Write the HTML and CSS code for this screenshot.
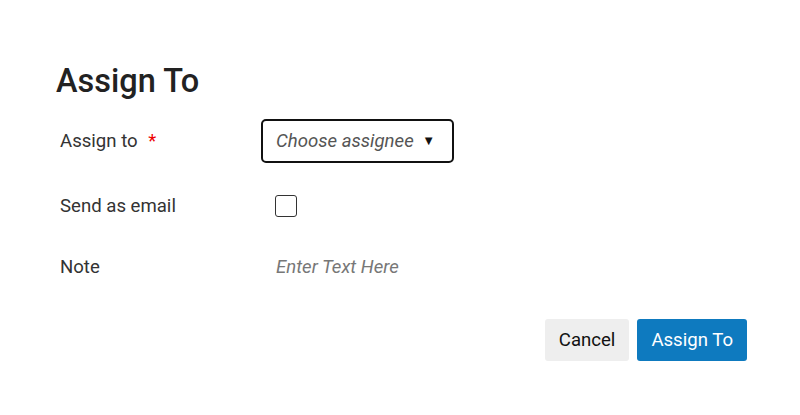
FILE: index.html
```html
<!DOCTYPE html>
<html lang="en">

<head>
    <meta charset="UTF-8">
    <meta name="viewport" content="width=device-width, initial-scale=1.0">
    <title>Assign To</title>
    <link rel="stylesheet" href="styles.css">
</head>

<body>
    <div class="dialog">
        <h1 class="dialog-title">Assign To</h1>

        <div class="form">
            <div class="form-row row-assignee">
                <label class="form-label">Assign to <span class="required">*</span></label>
                <div class="form-control">
                    <button class="select-box" type="button">
                        <span class="select-text">Choose assignee</span>
                        <span class="select-arrow">&#9660;</span>
                    </button>
                </div>
            </div>

            <div class="form-row row-email">
                <label class="form-label" for="sendEmail">Send as email</label>
                <div class="form-control">
                    <input type="checkbox" id="sendEmail" class="checkbox">
                </div>
            </div>

            <div class="form-row row-note">
                <label class="form-label" for="note">Note</label>
                <div class="form-control">
                    <input type="text" id="note" class="note-input" placeholder="Enter Text Here">
                </div>
            </div>
        </div>

        <div class="actions">
            <button class="btn btn-cancel" type="button">Cancel</button>
            <button class="btn btn-primary" type="button">Assign To</button>
        </div>
    </div>
</body>

</html>
```

FILE: styles.css
```css
body {
    margin: 0;
    font-family: Roboto, 'Noto Sans', sans-serif;
    color: #222;
    background: #fff;
}

.dialog {
    padding: 61px 53px 0 56px;
}

.dialog-title {
    margin: 0 0 18px;
    font-size: 32.5px;
    font-weight: 500;
    line-height: 40px;
    color: #222;
}

.form-row {
    display: flex;
    align-items: center;
}

.row-assignee {
    height: 43px;
}

.row-email {
    height: 43px;
    margin-top: 22px;
}

.row-note {
    height: 43px;
    margin-top: 18px;
}

.form-label {
    width: 201px;
    padding-left: 4px;
    font-size: 18.6px;
    color: #333;
}

.required {
    color: #e00;
    margin-left: 6px;
}

.form-control {
    display: flex;
    align-items: center;
}

.select-box {
    display: flex;
    align-items: center;
    height: 44px;
    width: 193px;
    padding: 0 17px 0 13px;
    border: 2px solid #111;
    border-radius: 5px;
    background: #fff;
    font-family: inherit;
    cursor: pointer;
    box-sizing: border-box;
}

.select-text {
    flex: 1;
    text-align: left;
    font-size: 18.6px;
    font-style: italic;
    color: #555;
}

.select-arrow {
    font-size: 13px;
    color: #111;
}

.checkbox {
    appearance: none;
    width: 22px;
    height: 22px;
    margin: 0 0 0 14px;
    border: 1px solid #333;
    border-radius: 3px;
    background: #fff;
}

.note-input {
    width: 300px;
    margin-left: 15px;
    padding: 0;
    border: none;
    outline: none;
    font-family: inherit;
    font-size: 18.6px;
    font-style: italic;
    color: #333;
}

.note-input::placeholder {
    color: #777;
}

.actions {
    display: flex;
    justify-content: flex-end;
    gap: 8px;
    margin-top: 31px;
}

.btn {
    height: 42px;
    padding: 0 14px;
    border: none;
    border-radius: 3px;
    font-family: inherit;
    font-size: 18.6px;
    cursor: pointer;
}

.btn-cancel {
    background: #eee;
    color: #111;
}

.btn-primary {
    background: #0e7abf;
    color: #fff;
}
```
